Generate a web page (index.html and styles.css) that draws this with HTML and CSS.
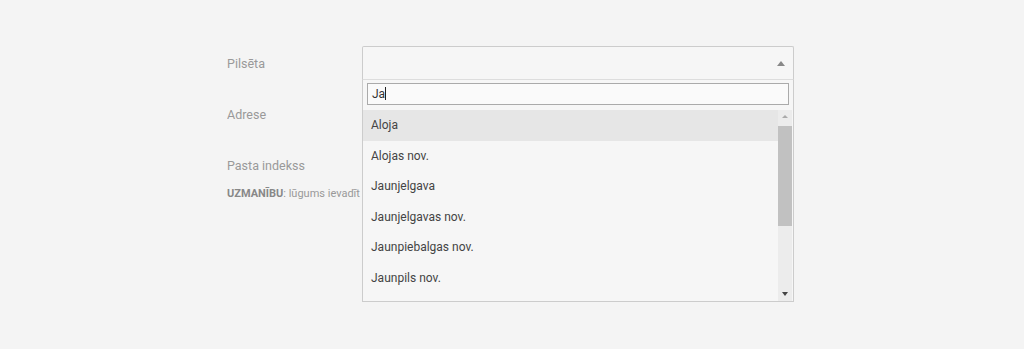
FILE: index.html
```html
<!DOCTYPE html>
<html>
<head>
	<meta charset="utf-8" />
	<link rel="stylesheet" href="styles.css">
</head>
<body>
<div id="address_form">
	<div class="form_row">
		<div class="form_label">Pilsēta</div>
		<div class="form_field">
			<div class="select_box">
				<span class="select_arrow"></span>
			</div>
			<div class="dropdown">
				<div class="search_wrap">
					<div class="search_input">Ja<span class="caret"></span></div>
				</div>
				<div class="option_area">
					<ul class="option_list">
						<li class="option active">Aloja</li>
						<li class="option">Alojas nov.</li>
						<li class="option">Jaunjelgava</li>
						<li class="option">Jaunjelgavas nov.</li>
						<li class="option">Jaunpiebalgas nov.</li>
						<li class="option">Jaunpils nov.</li>
					</ul>
					<div class="scrollbar">
						<span class="scroll_up"></span>
						<div class="scroll_track"><div class="scroll_thumb"></div></div>
						<span class="scroll_down"></span>
					</div>
				</div>
			</div>
		</div>
	</div>
	<div class="form_row">
		<div class="form_label">Adrese</div>
		<div class="form_field">
			<div class="text_box"></div>
		</div>
	</div>
	<div class="form_row short">
		<div class="form_label">Pasta indekss</div>
		<div class="form_field">
			<div class="text_box"></div>
		</div>
	</div>
	<p class="note"><b>UZMANĪBU</b>: lūgums ievadīt pasta indeksu formātā LV-1234</p>
</div>
</body>
</html>
```

FILE: styles.css
```css
html, body {
	height: 100%;
}

body {
	margin: 0;
	min-height: 349px;
	background-color: #f4f4f4;
	font-family: Roboto, "Liberation Sans", sans-serif;
	color: #999;
}

#address_form {
	width: 567px;
	height: 303px;
	margin-left: 227px;
	padding-top: 46px;
	overflow: hidden;
}

.form_row {
	display: flex;
	align-items: center;
	margin-bottom: 18px;
}

.form_row.short {
	margin-bottom: 5px;
}

.form_label {
	width: 135px;
	font-size: 12.5px;
}

.form_field {
	position: relative;
	width: 432px;
}

.select_box,
.text_box {
	height: 31px;
	border: 1px solid #ccc;
	border-radius: 2px;
	background-color: #f6f6f6;
	position: relative;
}

.select_box {
	height: 32px;
	border-bottom-color: #ddd;
	border-bottom-left-radius: 0;
	border-bottom-right-radius: 0;
}

.select_arrow {
	position: absolute;
	right: 8px;
	top: 14px;
	width: 0;
	height: 0;
	border-left: 4px solid transparent;
	border-right: 4px solid transparent;
	border-bottom: 5px solid #888;
}

.dropdown {
	position: absolute;
	left: 0;
	top: 34px;
	width: 430px;
	height: 221px;
	border: 1px solid #ccc;
	border-top: none;
	background-color: #f6f6f6;
	z-index: 5;
	color: #444;
	font-size: 12px;
}

.search_wrap {
	padding: 3px 4px 5px 4px;
}

.search_input {
	height: 20px;
	border: 1px solid #aaa;
	background-color: #fafafa;
	padding-left: 4px;
	line-height: 20px;
	color: #333;
}

.caret {
	display: inline-block;
	width: 1px;
	height: 13px;
	background-color: #222;
	vertical-align: -2px;
}

.option_area {
	display: flex;
	height: 191px;
	overflow: hidden;
}

.option_list {
	flex: 1;
	list-style: none;
	margin: 0;
	padding: 0;
}

.option {
	height: 30.6px;
	line-height: 30.6px;
	padding-left: 8px;
}

.option.active {
	background-color: #e6e6e6;
}

.scrollbar {
	width: 14px;
	margin-right: 1px;
	background-color: #ececec;
	display: flex;
	flex-direction: column;
	align-items: center;
}

.scroll_up,
.scroll_down {
	width: 0;
	height: 0;
	border-left: 3px solid transparent;
	border-right: 3px solid transparent;
	margin: 5px 0;
}

.scroll_up {
	border-bottom: 3px solid #aaa;
	margin-bottom: 8px;
}

.scroll_down {
	border-top: 4px solid #444;
	margin-top: 4px;
}

.scroll_track {
	flex: 1;
	width: 100%;
}

.scroll_thumb {
	width: 14px;
	height: 100px;
	background-color: #c1c1c1;
}

.note {
	margin: 0;
	width: 135px;
	overflow: hidden;
	font-size: 11px;
	white-space: nowrap;
}

.note b {
	color: #888;
}
```
